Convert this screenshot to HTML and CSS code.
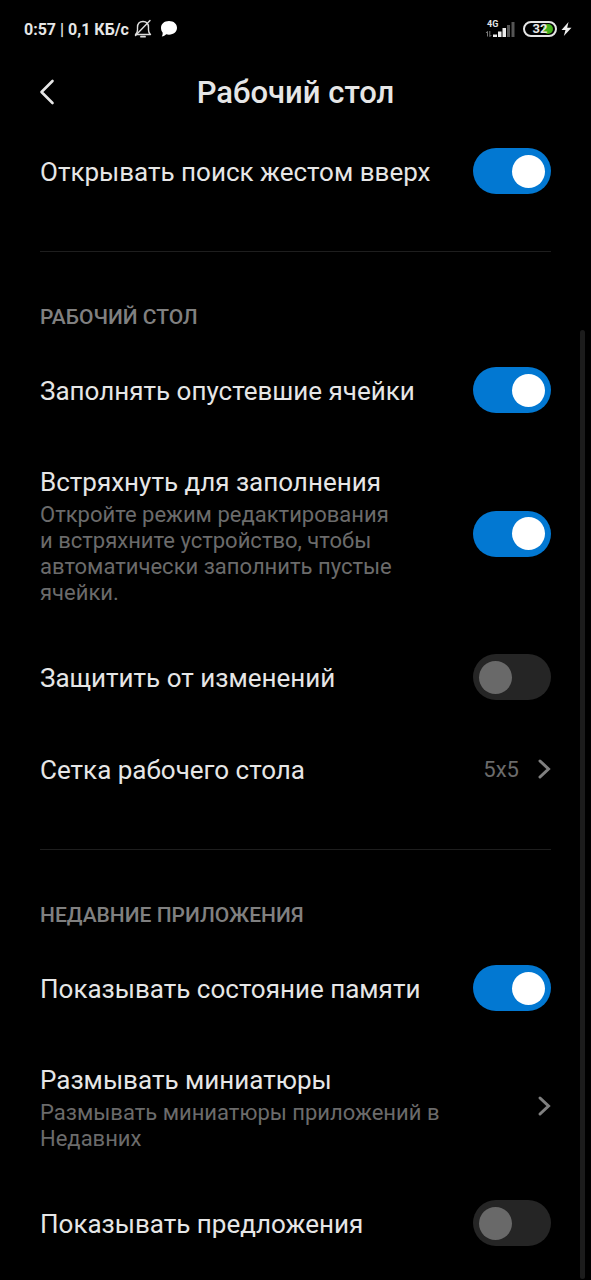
FILE: index.html
```html
<!DOCTYPE html>
<html lang="ru">
<head>
<meta charset="utf-8">
<meta name="viewport" content="width=device-width, initial-scale=1">
<title>Рабочий стол</title>
<link rel="stylesheet" href="styles.css">
</head>
<body>
<div class="screen">
  <div class="status">
    <div class="status-left">
      <span>0:57 | 0,1 КБ/с</span>
      <svg class="bell" width="18" height="20" viewBox="0 0 18 20" fill="none" stroke="#ddd" stroke-width="1.4" stroke-linecap="round" stroke-linejoin="round" aria-hidden="true">
        <path d="M1.500 15.500h15c-1.300-1-2-2.200-2-4.500V8.500C14.500 4.800 12.500 2.500 9 2.500S3.500 4.800 3.500 8.500V11c0 2.300-.7 3.500-2 4.500z"/>
        <path d="M16 1.500L1.500 16.500"/>
        <path d="M7 17.700h4" stroke-width="1.800"/>
      </svg>
      <svg class="chat" width="18" height="18" viewBox="0 0 18 18" fill="#fff" aria-hidden="true">
        <path d="M9 1c4.700 0 8 2.900 8 6.800s-3.300 6.900-8 6.900c-1 0-1.900-.1-2.800-.4-1.100 1.200-2.500 2-4.400 2.300.8-1.200 1-2.500.8-4C1.600 11.300 1 9.700 1 7.800 1 3.900 4.300 1 9 1z"/>
      </svg>
    </div>
    <div class="status-right">
      <div class="signal">
        <span class="network">4G</span>
        <svg width="30" height="17" viewBox="0 0 30 17" aria-hidden="true">
          <path d="M2.500 15.500v-5M1 12l1.500-1.700M4.800 10v5.500M6.300 14l-1.500 1.700" stroke="#777" fill="none"/>
          <path d="M8 13.500h4V16H8zM13 10.500h3.500V16H13zM17.500 7H21v9h-3.500z" fill="#eee"/>
          <path d="M22 4h3v12h-3zM26.500 1h3v15h-3z" fill="#555"/>
        </svg>
      </div>
      <div class="battery"><span class="battery-dot"></span><span class="battery-text">32</span></div>
      <svg class="bolt" width="11" height="16" viewBox="0 0 11 16" fill="#eee" aria-hidden="true"><path d="M7.500 1L.5 9h4L2.800 15 10.500 6.800H6.200z"/></svg>
    </div>
  </div>

  <header class="header">
    <button class="back" type="button" aria-label="Назад">
      <svg width="16" height="26" viewBox="0 0 16 26" fill="none" stroke="#e6e6e6" stroke-width="2.600" stroke-linecap="round" stroke-linejoin="round"><path d="M13.500 2L2.500 13l11 11"/></svg>
    </button>
    <h1 class="title">Рабочий стол</h1>
  </header>

  <main class="settings">
    <label class="row">
      <span class="text"><span class="name">Открывать поиск жестом вверх</span></span>
      <input class="switch" type="checkbox" role="switch" checked>
    </label>

    <section class="group">
      <h2 class="group-title">РАБОЧИЙ СТОЛ</h2>
      <label class="row">
        <span class="text"><span class="name">Заполнять опустевшие ячейки</span></span>
        <input class="switch" type="checkbox" role="switch" checked>
      </label>
      <label class="row">
        <span class="text detailed"><span class="name">Встряхнуть для заполнения</span>
        <span class="summary">Откройте режим редактирования и&nbsp;встряхните устройство, чтобы автоматически заполнить пустые ячейки.</span></span>
        <input class="switch" type="checkbox" role="switch" checked>
      </label>
      <label class="row">
        <span class="text"><span class="name">Защитить от изменений</span></span>
        <input class="switch" type="checkbox" role="switch">
      </label>
      <button class="row" type="button">
        <span class="text"><span class="name">Сетка рабочего стола</span></span>
        <span class="value">5x5</span>
        <svg class="chevron" width="14" height="22" viewBox="0 0 14 22" fill="none" aria-hidden="true"><path d="M3 3l8.500 8L3 19"/></svg>
      </button>
    </section>

    <section class="group">
      <h2 class="group-title">НЕДАВНИЕ ПРИЛОЖЕНИЯ</h2>
      <label class="row">
        <span class="text"><span class="name">Показывать состояние памяти</span></span>
        <input class="switch" type="checkbox" role="switch" checked>
      </label>
      <button class="row" type="button">
        <span class="text detailed"><span class="name">Размывать миниатюры</span>
        <span class="summary">Размывать миниатюры приложений в Недавних</span></span>
        <svg class="chevron" width="14" height="22" viewBox="0 0 14 22" fill="none" aria-hidden="true"><path d="M3 3l8.500 8L3 19"/></svg>
      </button>
      <label class="row">
        <span class="text"><span class="name">Показывать предложения</span></span>
        <input class="switch" type="checkbox" role="switch">
      </label>
    </section>
  </main>
  <div class="scrollbar"></div>
</div>
</body>
</html>
```
FILE: styles.css
```css
* { box-sizing: border-box; }

body {
  margin: 0;
  background: #000;
  color: #e6e6e6;
  font-family: Roboto, "Noto Sans", sans-serif;
}

button {
  margin: 0;
  padding: 0;
  border: 0;
  background: none;
  color: inherit;
  font: inherit;
  text-align: left;
}

.screen {
  position: relative;
  min-height: 100vh;
}

.status {
  display: flex;
  justify-content: space-between;
  align-items: center;
  height: 58px;
  padding: 0 19px 0 24px;
  font-size: 16px;
  font-weight: 700;
}

.status-left,
.status-right {
  display: flex;
  align-items: center;
}

.bell { margin-left: 5px; }
.chat { margin-left: 8px; }

.signal {
  position: relative;
  display: flex;
}

.network {
  position: absolute;
  top: -2px;
  left: 2px;
  font-size: 9px;
  line-height: 10px;
}

.battery {
  position: relative;
  display: flex;
  align-items: center;
  justify-content: center;
  width: 34px;
  height: 16px;
  margin-left: 8px;
  border: 2px solid #e6e6e6;
  border-radius: 8px;
}

.bolt { margin-left: 4px; }

.battery-dot {
  position: absolute;
  right: 2px;
  width: 10px;
  height: 10px;
  border-radius: 50%;
  background: #43b01c;
}

.battery-text {
  position: relative;
  font-size: 13px;
  line-height: 14px;
}

.header {
  display: grid;
  grid-template-columns: 40px 1fr 40px;
  align-items: center;
  height: 67px;
  padding: 0 39px;
}

.back {
  display: flex;
  align-items: center;
  height: 40px;
}

.title {
  margin: 0;
  padding-top: 3px;
  font-size: 31px;
  line-height: 40px;
  font-weight: 500;
  text-align: center;
}

.settings {
  padding: 0 40px;
}

.row {
  display: flex;
  align-items: center;
  width: 100%;
  min-height: 92px;
}

.text {
  flex: 1;
  max-width: 402px;
  padding: 31px 0 29px;
}

.detailed {
  padding-bottom: 25px;
}

.name,
.summary {
  display: block;
}

.name {
  font-size: 26px;
  line-height: 31px;
}

.summary {
  margin-top: 4px;
  color: #6b6b6b;
  font-size: 22px;
  line-height: 26px;
}

.switch {
  appearance: none;
  display: flex;
  flex: none;
  align-items: center;
  width: 78px;
  height: 46px;
  margin: 0 0 0 auto;
  padding: 0 6px;
  border-radius: 23px;
  background: #252525;
}

.switch::before {
  content: "";
  width: 33px;
  height: 33px;
  border-radius: 50%;
  background: #696969;
}

.switch:checked {
  justify-content: flex-end;
  background: #0278d2;
}

.switch:checked::before {
  background: #fff;
}

.value {
  margin-left: auto;
  color: #6b6b6b;
  font-size: 22px;
}

.chevron {
  flex: none;
  margin-left: auto;
  stroke: #808080;
  stroke-width: 3;
  stroke-linecap: round;
}

.value + .chevron { margin-left: 18px; }

.group {
  margin-top: 34px;
  border-top: 1px solid #1e1e1e;
  padding-top: 52px;
}

.group-title {
  margin: 0 0 14px;
  color: #808080;
  font-size: 21px;
  line-height: 26px;
  font-weight: 500;
}

.scrollbar {
  position: absolute;
  top: 330px;
  right: 6px;
  bottom: 1px;
  width: 5px;
  border-radius: 3px;
  background: #1c1c1c;
}
```
